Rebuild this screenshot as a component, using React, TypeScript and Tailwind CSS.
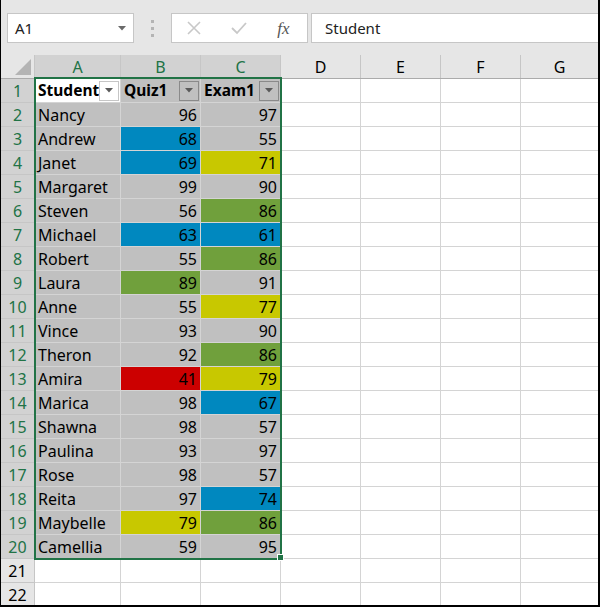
import React from 'react'

type Fill = '' | 'blue' | 'yellow' | 'green' | 'red'

interface Row {
  name: string
  quiz: number
  exam: number
  qf?: Fill
  ef?: Fill
}

const ROWS: Row[] = [
  { name: 'Nancy', quiz: 96, exam: 97 },
  { name: 'Andrew', quiz: 68, exam: 55, qf: 'blue' },
  { name: 'Janet', quiz: 69, exam: 71, qf: 'blue', ef: 'yellow' },
  { name: 'Margaret', quiz: 99, exam: 90 },
  { name: 'Steven', quiz: 56, exam: 86, ef: 'green' },
  { name: 'Michael', quiz: 63, exam: 61, qf: 'blue', ef: 'blue' },
  { name: 'Robert', quiz: 55, exam: 86, ef: 'green' },
  { name: 'Laura', quiz: 89, exam: 91, qf: 'green' },
  { name: 'Anne', quiz: 55, exam: 77, ef: 'yellow' },
  { name: 'Vince', quiz: 93, exam: 90 },
  { name: 'Theron', quiz: 92, exam: 86, ef: 'green' },
  { name: 'Amira', quiz: 41, exam: 79, qf: 'red', ef: 'yellow' },
  { name: 'Marica', quiz: 98, exam: 67, ef: 'blue' },
  { name: 'Shawna', quiz: 98, exam: 57 },
  { name: 'Paulina', quiz: 93, exam: 97 },
  { name: 'Rose', quiz: 98, exam: 57 },
  { name: 'Reita', quiz: 97, exam: 74, ef: 'blue' },
  { name: 'Maybelle', quiz: 79, exam: 86, qf: 'yellow', ef: 'green' },
  { name: 'Camellia', quiz: 59, exam: 95 },
]

const fillClass: Record<string, string> = {
  '': 'bg-[#c0c0c0]',
  blue: 'bg-[#0088bf]',
  yellow: 'bg-[#c8c800]',
  green: 'bg-[#70a03c]',
  red: 'bg-[#cc0000]',
}

const EMPTY_COLS = ['D', 'E', 'F']

const FilterButton = ({ active }: { active?: boolean }) => (
  <div
    className={`w-[20px] h-[20px] flex items-center justify-center border ${
      active ? 'bg-white border-[#c6c6c6]' : 'bg-[#c0c0c0] border-[#8a8a8a]'
    }`}
  >
    <svg width="8" height="5" viewBox="0 0 8 5">
      <path d="M0 0 L8 0 L4 4.5 Z" fill="#5a5a5a" />
    </svg>
  </div>
)

const RowHeader = ({ n, selected }: { n: number; selected?: boolean }) => (
  <div
    className={`w-[34px] shrink-0 h-full flex items-center justify-center pt-[1px] border-r border-b border-[#c6c6c6] text-[16px] ${
      selected ? 'bg-[#d2d2d2] text-[#217346]' : 'bg-[#e6e6e6] text-black'
    }`}
  >
    {n}
  </div>
)

const EmptyCells = () => (
  <>
    {EMPTY_COLS.map(c => (
      <div key={c} className="w-[80px] shrink-0 h-full bg-white border-r border-b border-[#d4d4d4]" />
    ))}
    <div className="flex-1 h-full bg-white border-b border-[#d4d4d4]" />
  </>
)

export default function App() {
  return (
    <div className="relative w-[600px] h-[607px] overflow-hidden bg-[#e6e6e6] border-l border-r-2 border-b-2 border-black font-['Noto_Sans',sans-serif] text-black">
      {/* formula bar */}
      <div className="h-[55px] flex items-start pt-[13px] pl-[6px]">
        <div className="w-[127px] h-[30px] bg-white border border-[#c6c6c6] flex items-center justify-between pl-[7px] pr-[7px]">
          <span className="text-[15px] text-[#222]">A1</span>
          <svg width="8" height="5" viewBox="0 0 8 5">
            <path d="M0 0 L8 0 L4 4.5 Z" fill="#6a6a6a" />
          </svg>
        </div>
        <div className="w-[37px] h-[30px] flex flex-col items-center justify-center gap-[4px]">
          <div className="w-[3px] h-[3px] bg-[#b4b4b4]" />
          <div className="w-[3px] h-[3px] bg-[#b4b4b4]" />
          <div className="w-[3px] h-[3px] bg-[#b4b4b4]" />
        </div>
        <div className="w-[137px] h-[30px] bg-white border border-[#c6c6c6] flex items-center">
          <div className="w-[44px] flex justify-center">
            <svg width="16" height="16" viewBox="0 0 16 16">
              <path d="M2 2 L14 14 M14 2 L2 14" stroke="#c8c8c8" strokeWidth="1.6" />
            </svg>
          </div>
          <div className="w-[45px] flex justify-center">
            <svg width="18" height="16" viewBox="0 0 18 16">
              <path d="M2 8 L7 13 L16 3" stroke="#c8c8c8" strokeWidth="1.8" fill="none" />
            </svg>
          </div>
          <div className="w-[45px] flex justify-center">
            <span className="font-['Liberation_Serif',serif] italic text-[17px] text-[#555] leading-none">fx</span>
          </div>
        </div>
        <div className="ml-[3px] flex-1 h-[30px] bg-white border-l border-t border-b border-[#c6c6c6] flex items-center pl-[13px]">
          <span className="text-[15px] text-[#222]">Student</span>
        </div>
      </div>

      {/* column headers */}
      <div className="flex h-[24px] border-b border-[#ababab]">
        <div className="w-[34px] shrink-0 h-full bg-[#e6e6e6] border-r border-[#c6c6c6] flex items-end justify-end pr-[3px] pb-[3px]">
          <svg width="16" height="16" viewBox="0 0 16 16">
            <path d="M16 0 L16 16 L0 16 Z" fill="#b4b4b4" />
          </svg>
        </div>
        <div className="w-[86px] shrink-0 bg-[#d2d2d2] border-r border-[#c6c6c6] flex items-center justify-center pt-[1px] text-[16px] text-[#217346]">A</div>
        <div className="w-[80px] shrink-0 bg-[#d2d2d2] border-r border-[#c6c6c6] flex items-center justify-center pt-[1px] text-[16px] text-[#217346]">B</div>
        <div className="w-[80px] shrink-0 bg-[#d2d2d2] border-r border-[#c6c6c6] flex items-center justify-center pt-[1px] text-[16px] text-[#217346]">C</div>
        {EMPTY_COLS.map(c => (
          <div key={c} className="w-[80px] shrink-0 border-r border-[#c6c6c6] flex items-center justify-center pt-[1px] text-[16px]">{c}</div>
        ))}
        <div className="flex-1 flex items-center justify-center pt-[1px] text-[16px]">G</div>
      </div>

      {/* row 1: table header */}
      <div className="flex h-[24px] text-[16px]">
        <RowHeader n={1} selected />
        <div className="w-[86px] shrink-0 h-full bg-white border-r border-b border-[#d4d4d4] flex items-center justify-between pl-[3px] pr-[1px]">
          <span className="font-bold text-[15.5px] pt-[1px]">Student</span>
          <FilterButton active />
        </div>
        <div className="w-[80px] shrink-0 h-full bg-[#c0c0c0] border-r border-b border-[#d4d4d4] flex items-center justify-between pl-[3px] pr-[1px]">
          <span className="font-bold text-[15.5px] pt-[1px]">Quiz1</span>
          <FilterButton />
        </div>
        <div className="w-[80px] shrink-0 h-full bg-[#c0c0c0] border-r border-b border-[#d4d4d4] flex items-center justify-between pl-[3px] pr-[1px]">
          <span className="font-bold text-[15.5px] pt-[1px]">Exam1</span>
          <FilterButton />
        </div>
        <EmptyCells />
      </div>

      {/* data rows */}
      {ROWS.map((r, i) => (
        <div key={r.name} className="flex h-[24px] text-[16px]">
          <RowHeader n={i + 2} selected />
          <div className="w-[86px] shrink-0 h-full bg-[#c0c0c0] border-r border-b border-[#d4d4d4] flex items-center pl-[3px] pt-[1px]">
            {r.name}
          </div>
          <div className={`w-[80px] shrink-0 h-full ${fillClass[r.qf || '']} border-r border-b border-[#d4d4d4] flex items-center justify-end pr-[3px] pt-[1px]`}>
            {r.quiz}
          </div>
          <div className={`w-[80px] shrink-0 h-full ${fillClass[r.ef || '']} border-r border-b border-[#d4d4d4] flex items-center justify-end pr-[3px] pt-[1px]`}>
            {r.exam}
          </div>
          <EmptyCells />
        </div>
      ))}

      {/* empty rows */}
      {[21, 22].map(n => (
        <div key={n} className="flex h-[24px] text-[16px]">
          <RowHeader n={n} />
          <div className="w-[86px] shrink-0 h-full bg-white border-r border-b border-[#d4d4d4]" />
          <div className="w-[80px] shrink-0 h-full bg-white border-r border-b border-[#d4d4d4]" />
          <div className="w-[80px] shrink-0 h-full bg-white border-r border-b border-[#d4d4d4]" />
          <EmptyCells />
        </div>
      ))}

      {/* selection outline */}
      <div className="absolute left-[33px] top-[77px] w-[248px] h-[483px] border-2 border-[#217346] pointer-events-none" />
      <div className="absolute left-[276px] top-[554px] w-[7px] h-[7px] bg-[#217346] border border-white" />
    </div>
  )
}
